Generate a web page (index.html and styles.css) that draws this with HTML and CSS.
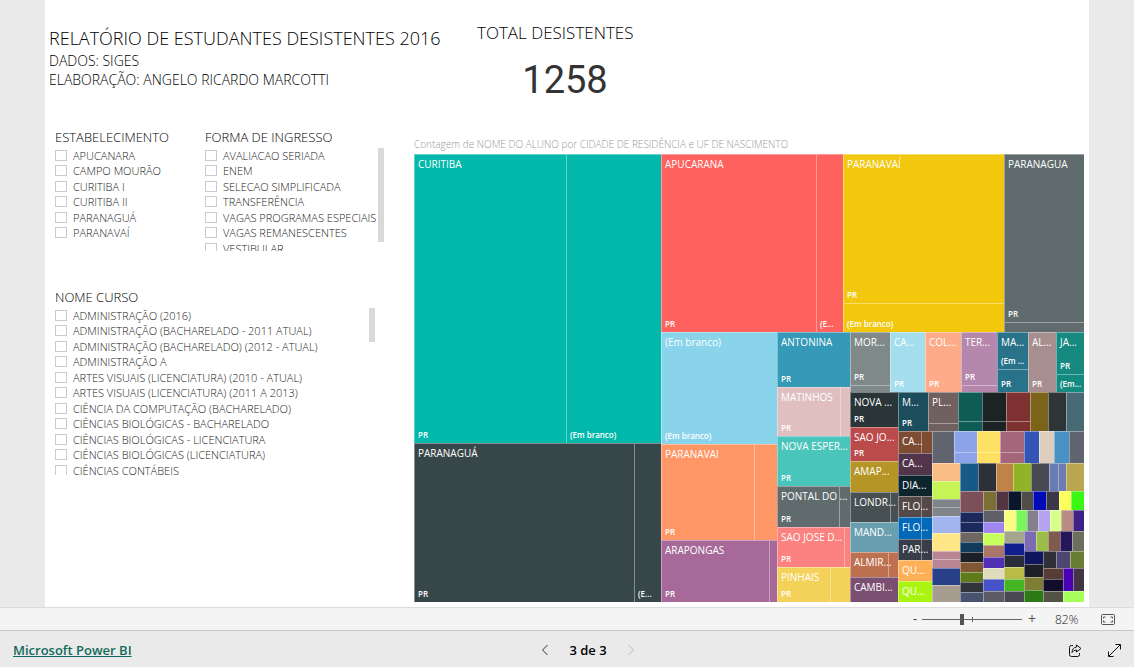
FILE: index.html
```html
<!DOCTYPE html>
<html lang="pt-BR">
<head>
<meta charset="utf-8">
<title>Relatório de Estudantes Desistentes 2016</title>
<link rel="stylesheet" href="styles.css">
</head>
<body>
<main class="page">
  <header class="header">
    <div class="heading">
      <h1>RELATÓRIO DE ESTUDANTES DESISTENTES 2016</h1>
      <p>DADOS: SIGES</p>
      <p>ELABORAÇÃO: ANGELO RICARDO MARCOTTI</p>
    </div>
    <section class="card">
      <h2>TOTAL DESISTENTES</h2>
      <p class="card-value">1258</p>
    </section>
  </header>
  <div class="content">
    <div class="filters">
      <div class="filter-row">
        <fieldset class="slicer">
          <legend>ESTABELECIMENTO</legend>
          <ul class="options">
            <li><label><input type="checkbox">APUCANARA</label></li>
            <li><label><input type="checkbox">CAMPO MOURÃO</label></li>
            <li><label><input type="checkbox">CURITIBA I</label></li>
            <li><label><input type="checkbox">CURITIBA II</label></li>
            <li><label><input type="checkbox">PARANAGUÁ</label></li>
            <li><label><input type="checkbox">PARANAVAÍ</label></li>
          </ul>
        </fieldset>
        <fieldset class="slicer">
          <legend>FORMA DE INGRESSO</legend>
          <div class="scroller">
            <ul class="options options-short">
              <li><label><input type="checkbox">AVALIACAO SERIADA</label></li>
              <li><label><input type="checkbox">ENEM</label></li>
              <li><label><input type="checkbox">SELECAO SIMPLIFICADA</label></li>
              <li><label><input type="checkbox">TRANSFERÊNCIA</label></li>
              <li><label><input type="checkbox">VAGAS PROGRAMAS ESPECIAIS</label></li>
              <li><label><input type="checkbox">VAGAS REMANESCENTES</label></li>
              <li><label><input type="checkbox">VESTIBULAR</label></li>
            </ul>
            <div class="thumb thumb-long"></div>
          </div>
        </fieldset>
      </div>
      <fieldset class="slicer slicer-wide">
        <legend>NOME CURSO</legend>
        <div class="scroller">
          <ul class="options options-tall">
            <li><label><input type="checkbox">ADMINISTRAÇÃO (2016)</label></li>
            <li><label><input type="checkbox">ADMINISTRAÇÃO (BACHARELADO - 2011 ATUAL)</label></li>
            <li><label><input type="checkbox">ADMINISTRAÇÃO (BACHARELADO) (2012 - ATUAL)</label></li>
            <li><label><input type="checkbox">ADMINISTRAÇÃO A</label></li>
            <li><label><input type="checkbox">ARTES VISUAIS (LICENCIATURA) (2010 - ATUAL)</label></li>
            <li><label><input type="checkbox">ARTES VISUAIS (LICENCIATURA) (2011 A 2013)</label></li>
            <li><label><input type="checkbox">CIÊNCIA DA COMPUTAÇÃO (BACHARELADO)</label></li>
            <li><label><input type="checkbox">CIÊNCIAS BIOLÓGICAS - BACHARELADO</label></li>
            <li><label><input type="checkbox">CIÊNCIAS BIOLÓGICAS - LICENCIATURA</label></li>
            <li><label><input type="checkbox">CIÊNCIAS BIOLÓGICAS (LICENCIATURA)</label></li>
            <li><label><input type="checkbox">CIÊNCIAS CONTÁBEIS</label></li>
          </ul>
          <div class="thumb thumb-short"></div>
        </div>
      </fieldset>
    </div>
    <section class="chart">
      <h2>Contagem de NOME DO ALUNO por CIDADE DE RESIDÊNCIA e UF DE NASCIMENTO</h2>
      <div class="treemap" id="treemap"></div>
    </section>
  </div>
</main>
<div class="zoombar">
  <button type="button" class="zoom-out" aria-label="Reduzir">-</button>
  <input type="range" class="zoom-range" min="0" max="100" value="40" aria-label="Zoom">
  <button type="button" class="zoom-in" aria-label="Ampliar">+</button>
  <span class="zoom-value">82%</span>
  <button type="button" class="fit" aria-label="Ajustar à página">
    <svg width="14" height="11" viewBox="0 0 14 11" fill="none" stroke="#555"><rect x=".5" y=".5" width="13" height="10" rx="1"/><path d="M4.500 3H2.500v1.500M9.500 3h2v1.500M4.500 8h-2V6.500M9.500 8h2V6.500"/></svg>
  </button>
</div>
<footer class="footer">
  <a href="#">Microsoft Power BI</a>
  <nav class="pager">
    <button type="button" aria-label="Página anterior"><svg width="8" height="12" viewBox="0 0 8 12" fill="none" stroke="#333"><path d="M6.500 1 1.500 6l5 5"/></svg></button>
    <span>3 de 3</span>
    <button type="button" disabled aria-label="Próxima página"><svg width="8" height="12" viewBox="0 0 8 12" fill="none" stroke="#bbb"><path d="m1.500 1 5 5-5 5"/></svg></button>
  </nav>
  <div class="actions">
    <button type="button" aria-label="Compartilhar"><svg width="14" height="13" viewBox="0 0 14 13" fill="none" stroke="#111" stroke-linejoin="round"><path d="M5 1.500H3.500q-2 0-2 2v7q0 2 2 2h6q2 0 2-2V9"/><path d="M8.500 1 13 4.500 8.500 8V6Q5.500 6 4 8.500 4.300 3.500 8.500 3Z"/></svg></button>
    <button type="button" aria-label="Tela inteira"><svg width="13" height="13" viewBox="0 0 13 13" fill="none" stroke="#111"><path d="M1 12 12 1M7.500.5h5v5M.5 7.500v5h5"/></svg></button>
  </div>
</footer>
<script src="treemap.js"></script>
</body>
</html>
```

FILE: styles.css
```css
* {
  box-sizing: border-box;
}

body {
  margin: 0;
  min-height: 100vh;
  display: flex;
  flex-direction: column;
  background: #eaeaea;
  font-family: "Open Sans", "Noto Sans", sans-serif;
  color: #333;
}

h1, h2, p, ul, fieldset {
  margin: 0;
  padding: 0;
  border: 0;
  font-weight: 400;
}

button {
  padding: 0;
  border: 0;
  background: none;
  font: inherit;
  color: inherit;
  display: flex;
  align-items: center;
  justify-content: center;
}

.page {
  flex: 1;
  display: flex;
  flex-direction: column;
  margin: 0 45px;
  padding: 22px 5px 5px 4px;
  background: #fff;
}

.header {
  display: flex;
  gap: 31px;
  height: 108px;
}

.heading {
  width: 397px;
  padding-top: 3px;
  white-space: nowrap;
  color: #000;
}

.heading h1 {
  font-size: 18px;
  font-weight: 300;
  line-height: 26px;
}

.heading p {
  font-size: 14px;
  font-weight: 300;
  line-height: 19px;
}

.card {
  width: 176px;
}

.card h2 {
  font-size: 17px;
  font-weight: 300;
  line-height: 22px;
  color: #000;
  white-space: nowrap;
}

.card-value {
  padding-top: 13px;
  font-family: Roboto, sans-serif;
  font-size: 38px;
  line-height: 46px;
  text-align: center;
}

.content {
  flex: 1;
  display: grid;
  grid-template-columns: 335px 1fr;
  gap: 30px;
}

.filters {
  padding-left: 6px;
}

.filter-row {
  display: grid;
  grid-template-columns: 150px 1fr;
  height: 160px;
}

.slicer {
  min-width: 0;
}

.slicer legend {
  padding: 0 0 4px;
  font-size: 13px;
  font-weight: 300;
  line-height: 14px;
  color: #000;
}

.slicer-wide {
  padding-right: 9px;
}

.scroller {
  display: flex;
  justify-content: space-between;
}

.options {
  list-style: none;
  font-size: 11px;
  font-weight: 300;
  line-height: 15px;
  white-space: nowrap;
  color: #222;
}

.options-short {
  height: 103px;
  width: 172px;
  overflow: hidden;
}

.options-tall {
  height: 167px;
  overflow: hidden;
}

.options li {
  height: 15px;
}

.options li:nth-child(even) {
  height: 16px;
}

.options label {
  display: flex;
  align-items: center;
  gap: 6px;
}

.options input {
  appearance: none;
  flex: none;
  width: 12px;
  height: 11px;
  margin: 0;
  border: 1px solid #c8ccd2;
  background: #fff;
}

.thumb {
  flex: none;
  width: 6px;
  background: #d9d9d9;
}

.thumb-long {
  height: 94px;
}

.thumb-short {
  height: 34px;
}

.chart {
  display: flex;
  flex-direction: column;
  min-width: 0;
  padding-top: 7px;
}

.chart h2 {
  font-size: 10px;
  font-weight: 300;
  line-height: 14px;
  padding-bottom: 3px;
  color: #999;
}

.treemap {
  flex: 1;
  display: flex;
  min-height: 400px;
}

.group,
.cell,
.part {
  display: flex;
  min-width: 0;
  min-height: 0;
  overflow: hidden;
}

.vertical {
  flex-direction: column;
}

.cell {
  position: relative;
  color: #fff;
}

.cell-label {
  position: absolute;
  top: 3px;
  left: 4px;
  font-size: 10px;
  line-height: 14px;
  white-space: nowrap;
}

.part {
  align-items: flex-end;
  box-shadow: inset 1px 1px rgba(255, 255, 255, 0.38);
}

.part-label {
  padding: 0 0 2px 4px;
  font-size: 8px;
  font-weight: 600;
  line-height: 12px;
  white-space: nowrap;
}

.zoombar {
  display: flex;
  align-items: center;
  justify-content: flex-end;
  height: 23px;
  padding-right: 19px;
  border-top: 1px solid #dcdcdc;
  background: #f4f4f4;
  color: #555;
}

.zoom-out,
.zoom-in {
  width: 10px;
  font-size: 14px;
  line-height: 16px;
}

.zoom-range {
  appearance: none;
  width: 100px;
  height: 11px;
  margin: 0 5px 0 2px;
  background:
    linear-gradient(#666, #666) center / 1px 5px no-repeat,
    linear-gradient(#666, #666) center / 100% 1px no-repeat;
}

.zoom-range::-webkit-slider-thumb {
  appearance: none;
  width: 4px;
  height: 11px;
  background: #555;
}

.zoom-value {
  width: 64px;
  padding-left: 18px;
  font-size: 12px;
  font-weight: 300;
  color: #222;
}

.footer {
  display: grid;
  grid-template-columns: 1fr auto 1fr;
  align-items: center;
  height: 37px;
  padding: 2px 13px 0;
  border-top: 1px solid #c8c8c8;
  font-size: 13px;
  color: #000;
}

.footer a {
  color: #0f6b5c;
  font-weight: 600;
}

.pager {
  display: flex;
  align-items: center;
  gap: 20px;
  padding-left: 42px;
  font-weight: 600;
}

.actions {
  display: flex;
  justify-content: flex-end;
  gap: 26px;
}
```

FILE: treemap.js
```js
// Sizes are relative weights; every group shares its space among its children.
const row = (size, ...items) => ({ size, items, vertical: false });
const col = (size, ...items) => ({ size, items, vertical: true });
const cell = (size, color, label = "", parts = [[1, ""]], vertical = false) =>
  ({ size, color, label, parts, vertical });
const cells = (text) => text.split(" ").map((entry) => {
  const [size, color] = entry.split(":");
  return cell(Number(size), "#" + color);
});

const PR = [[1, "PR"]];

// The smallest cities, from the bottom right corner outwards.
const corner = row(34,
  col(20, ...cells("11:553c35 12:130d2c 11:535247")),
  col(21,
    row(23, ...cells("10:4a00b3 11:413546")),
    cell(11, "#a6ff5a")));

const tail1 = row(51,
  col(19, ...cells("13:10155f 13:1e1f27 13:7e7d32 12:2c7a16")),
  col(41,
    row(17, ...cells("13:303138 14:4d4572 14:687c34")),
    corner));

const tail2 = row(71,
  col(20, ...cells("12:a4a58d 12:121e8b 12:2b2c39 12:b8bb48 12:45b522 11:4a4853")),
  col(60,
    row(20, ...cells("12:7c6bb3 12:9dbd4a 12:7f5b4e 12:26175a 12:6e6e60")),
    tail1));

const tail3 = row(92,
  col(21, ...cells("12:5f5f69 11:a084ef 12:c6ff5b 12:a97668 11:5230b5 11:e0ddbd 12:4751c8 11:5c5c66")),
  col(80,
    row(21, ...cells("12:f8fd82 11:7af658 11:82828c 12:b4a3ee 11:d8ff87 12:b98d82 11:3c2385")),
    tail2));

const tail4 = row(111,
  col(23, ...cells("21:7c4f59 10:1a2a5c 10:1a2a5c 10:6e6761 10:103b5a 10:1b2028 10:7f5733 10:5f7a19 10:303339 10:47536f")),
  col(101,
    row(19, ...cells("13:7c6f35 12:533541 13:0b152b 12:514e47 13:000ab8 13:3a3749 12:feff5c 13:39f914")),
    tail3));

const tail5 = row(138,
  col(28,
    ...cells("17:fabd83 18:c6f457"),
    cell(17, "#7f8488", "", [[1, ""], [1, ""]], true),
    ...cells("17:a3b5ed 18:fee688"),
    cell(17, "#b88594", "", [[1, ""], [1, ""]], true),
    ...cells("17:274088 17:a69c90")),
  col(124,
    row(27,
      ...cells("18:175a88 18:2b303a 17:be8345 18:8fb526 18:484b54"),
      cell(17, "#6b7cb2", "", [[1, ""], [1, ""]]),
      cell(18, "#baa650")),
    tail4));

const tail6 = row(170,
  col(34,
    cell(22, "#7e4b33", "CA...", [[23, ""], [11, ""]]),
    cell(21, "#52354b", "CA..."),
    cell(21, "#0d262e", "DIA..."),
    cell(21, "#544848", "FLO...", [[23, ""], [11, ""]]),
    cell(22, "#0269b8", "FLO...", [[23, ""], [11, ""]]),
    cell(21, "#373d49", "PAR...", [[23, ""], [11, ""]]),
    cell(21, "#ffb056", "QU..."),
    cell(21, "#a9f511", "QU...")),
  col(152,
    row(32,
      cell(22, "#5f646e"),
      cell(23, "#8ca2e9", "", [[21, ""], [11, ""]], true),
      cell(23, "#fee063", "", [[21, ""], [11, ""]], true),
      cell(24, "#a5667b", "", [[21, ""], [11, ""]], true),
      ...cells("15:3355b5 15:decebf 15:4990c4 15:5f646e")),
    tail5));

const tail7 = row(209,
  col(48,
    cell(35, "#293537", "NOVA ...", PR),
    cell(34, "#bb4a4a", "SAO JO...", PR),
    cell(30, "#b59525", "AMAP..."),
    cell(30, "#475052", "LONDR...", [[40, ""], [8, ""]]),
    cell(30, "#6a9fb0", "MAND..."),
    cell(25, "#bd7150", "ALMIR...", [[38, ""], [10, ""]]),
    cell(25, "#7b4f71", "CAMBI...")),
  col(186,
    row(39,
      cell(30, "#1b4d5c", "M...", PR),
      cell(30, "#706060", "PL...", [[31, ""], [8, ""]], true),
      cell(24, "#0f5c55", "", [[29, ""], [10, ""]], true),
      cell(24, "#1c2325", "", [[29, ""], [10, ""]], true),
      cell(24, "#7d3231", "", [[29, ""], [10, ""]], true),
      ...cells("18:7b6419 18:2f3537 18:476a75")),
    tail6));

const data = row(1,
  col(247,
    cell(289, "#01b8aa", "CURITIBA", [[152, "PR"], [95, "(Em branco)"]]),
    cell(159, "#374649", "PARANAGUÁ", [[220, "PR"], [27, "(E..."]])),
  col(423,
    row(178,
      cell(182, "#fd625e", "APUCARANA", [[155, "PR"], [27, "(E..."]]),
      cell(161, "#f2c80f", "PARANAVAÍ", [[150, "PR"], [29, "(Em branco)"]], true),
      cell(80, "#5f6b6d", "PARANAGUA", [[169, "PR"], [10, ""]], true)),
    row(270,
      col(116,
        cell(112, "#8ad4eb", "(Em branco)", [[1, "(Em branco)"]]),
        cell(96, "#fe9666", "PARANAVAI", [[93, "PR"], [23, ""]]),
        cell(62, "#a66999", "ARAPONGAS", [[108, "PR"], [8, ""]])),
      col(73,
        cell(55, "#3599b8", "ANTONINA", PR),
        cell(49, "#dfbfbf", "MATINHOS", [[63, "PR"], [10, ""]]),
        cell(49, "#4ac5bb", "NOVA ESPER...", PR),
        cell(41, "#5f6b6d", "PONTAL DO ...", [[62, "PR"], [11, ""]]),
        cell(40, "#fb8281", "SAO JOSE D...", [[67, "PR"], [6, ""]]),
        cell(35, "#f4d25a", "PINHAIS", [[53, "PR"], [20, ""]])),
      col(234,
        row(60,
          cell(40, "#7f898a", "MOR...", [[53, "PR"], [7, ""]], true),
          cell(35, "#a4ddee", "CA...", PR),
          cell(36, "#fdab89", "COL...", PR),
          cell(36, "#b687ac", "TER...", [[53, "PR"], [7, ""]], true),
          cell(31, "#28738a", "MA...", [[37, "(Em ..."], [23, "PR"]], true),
          cell(28, "#a78f8f", "AL...", PR),
          cell(28, "#168980", "JA...", [[42, "PR"], [18, "(Em..."]], true)),
        tail7))));

function block(className, size, vertical) {
  const el = document.createElement("div");
  el.className = className + (vertical ? " vertical" : "");
  el.style.flex = `${size} 1 0`;
  return el;
}

function text(className, value) {
  const el = document.createElement("span");
  el.className = className;
  el.textContent = value;
  return el;
}

function draw(node) {
  if (node.items) {
    const group = block("group", node.size, node.vertical);
    group.append(...node.items.map(draw));
    return group;
  }
  const el = block("cell", node.size, node.vertical);
  el.style.backgroundColor = node.color;
  for (const [size, label] of node.parts) {
    const part = block("part", size);
    if (label) part.append(text("part-label", label));
    el.append(part);
  }
  if (node.label) el.append(text("cell-label", node.label));
  return el;
}

document.getElementById("treemap").append(draw(data));
```
